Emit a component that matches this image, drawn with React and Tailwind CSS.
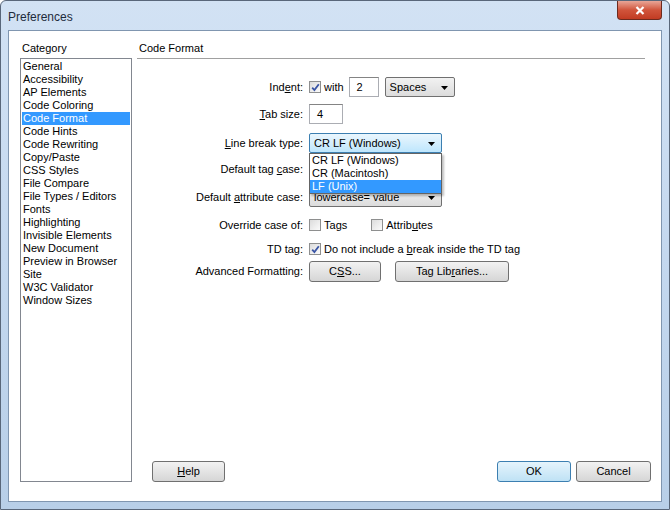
import React from "react";

const categories = [
  "General",
  "Accessibility",
  "AP Elements",
  "Code Coloring",
  "Code Format",
  "Code Hints",
  "Code Rewriting",
  "Copy/Paste",
  "CSS Styles",
  "File Compare",
  "File Types / Editors",
  "Fonts",
  "Highlighting",
  "Invisible Elements",
  "New Document",
  "Preview in Browser",
  "Site",
  "W3C Validator",
  "Window Sizes",
];

const Arrow = () => (
  <svg width="7" height="4" viewBox="0 0 7 4" className="absolute right-[6px] top-[8px]">
    <path d="M0 0 H7 L3.5 4 Z" fill="#000" />
  </svg>
);

const Checkbox = ({ checked }) => (
  <div className="w-[12px] h-[12px] border border-[#8e8f8f] bg-gradient-to-br from-[#dcdcdc] to-[#fbfbfb] flex items-center justify-center shrink-0">
    {checked && (
      <svg width="9" height="9" viewBox="0 0 9 9">
        <path d="M1.2 4.6 L3.4 7 L7.8 1.2" fill="none" stroke="#3a55a5" strokeWidth="1.8" />
      </svg>
    )}
  </div>
);

const Select = ({ children, className, focused }) => (
  <div
    className={
      "relative h-[20px] rounded-[2px] border pl-[4px] leading-[18px] " +
      (focused
        ? "border-[#3c7fb1] bg-gradient-to-b from-[#eaf6fd] to-[#bee6fd] "
        : "border-[#707070] bg-gradient-to-b from-[#f2f2f2] to-[#dcdcdc] ") +
      className
    }
  >
    {children}
    <Arrow />
  </div>
);

const Button = ({ children, className, primary }) => (
  <div
    className={
      "h-[21px] rounded-[3px] border flex items-center justify-center " +
      (primary
        ? "border-[#3c7fb1] bg-gradient-to-b from-[#e5f4fc] to-[#bfe2f5] "
        : "border-[#707070] bg-gradient-to-b from-[#f2f2f2] to-[#d6d6d6] ") +
      className
    }
  >
    {children}
  </div>
);

const Row = ({ label, className, children }) => (
  <div className={"flex items-center h-[20px] " + className}>
    <div className="w-[167px] text-right pr-[1px]">{label}</div>
    <div className="ml-[5px] flex items-center">{children}</div>
  </div>
);

export default function App() {
  return (
    <div
      className="w-[670px] h-[510px] bg-gradient-to-b from-[#d2e2f4] via-[#c4d8ef] to-[#b8cfe8] border border-[#59677a] rounded-t-[6px] flex flex-col text-[11px] text-black overflow-hidden"
      style={{ fontFamily: '"Liberation Sans", Arial, sans-serif' }}
    >
      {/* title bar */}
      <div className="h-[29px] flex items-start justify-between relative">
        <div className="pl-[7px] pt-[7px] text-[12px] text-[#1e2b3c]">Preferences</div>
        <div className="mr-[7px] w-[45px] h-[19px] rounded-b-[4px] border border-t-0 border-[#6d2a1e] bg-gradient-to-b from-[#e8a597] via-[#d0543b] to-[#c23b22] flex items-center justify-center">
          <svg width="10" height="9" viewBox="0 0 10 9">
            <path d="M1.5 1 L8.5 8 M8.5 1 L1.5 8" stroke="#fff" strokeWidth="2.2" />
          </svg>
        </div>
      </div>

      {/* client area */}
      <div className="flex-1 mx-[7px] mb-[7px] bg-white border border-[#8096b0] flex pt-[11px] pb-[19px]">
        {/* left column */}
        <div className="ml-[11px] w-[112px] flex flex-col">
          <div className="h-[13px] leading-[13px] pl-[2px]">Category</div>
          <div className="mt-[3px] flex-1 border border-[#828790] pt-[1px] pl-[1px] pr-[1px]">
            {categories.map((c) => (
              <div
                key={c}
                className={
                  "h-[13px] leading-[13px] pl-[1px] whitespace-nowrap " +
                  (c === "Code Format" ? "bg-[#3399ff] text-white" : "")
                }
              >
                {c}
              </div>
            ))}
          </div>
        </div>

        {/* right column */}
        <div className="ml-[5px] flex-1 flex flex-col pr-[10px]">
          <div className="h-[13px] leading-[13px] pl-[2px]">Code Format</div>
          <div className="mt-[3px] h-[1px] bg-[#a0a0a0] mr-[6px]" />

          <div className="mt-[18px] flex flex-col">
            <Row label={<>Ind<u>e</u>nt:</>}>
              <Checkbox checked />
              <span className="ml-[3px]">with</span>
              <div className="ml-[5px] w-[30px] h-[20px] border border-[#abadb3] border-t-[#848484] pl-[7px] leading-[18px]">2</div>
              <Select className="ml-[6px] w-[70px]">Spaces</Select>
            </Row>
            <Row label={<><u>T</u>ab size:</>} className="mt-[7px]">
              <div className="w-[34px] h-[20px] border border-[#abadb3] border-t-[#848484] pl-[7px] leading-[18px]">4</div>
            </Row>
            <Row label={<><u>L</u>ine break type:</>} className="mt-[9px]">
              <div className="relative">
                <Select focused className="w-[133px]">CR LF (Windows)</Select>
                <div className="absolute left-0 top-[20px] w-[133px] border border-[#646464] bg-white z-10 shadow-[2px_2px_2px_rgba(0,0,0,0.25)]">
                  <div className="h-[13px] leading-[13px] pl-[2px]">CR LF (Windows)</div>
                  <div className="h-[13px] leading-[13px] pl-[2px]">CR (Macintosh)</div>
                  <div className="h-[13px] leading-[13px] pl-[2px] bg-[#3399ff] text-white">LF (Unix)</div>
                </div>
              </div>
            </Row>
            <Row label={<>Default tag <u>c</u>ase:</>} className="mt-[6px]">
              <Select className="w-[133px]" />
            </Row>
            <Row label={<>Default <u>a</u>ttribute case:</>} className="mt-[8px]">
              <Select className="w-[133px]">lowercase= value</Select>
            </Row>
            <Row label="Override case of:" className="mt-[8px]">
              <Checkbox />
              <span className="ml-[3px]">Ta<u>g</u>s</span>
              <div className="ml-[24px]">
                <Checkbox />
              </div>
              <span className="ml-[3px]">Attrib<u>u</u>tes</span>
            </Row>
            <Row label="TD tag:" className="mt-[4px]">
              <Checkbox checked />
              <span className="ml-[3px]">Do not include a <u>b</u>reak inside the TD tag</span>
            </Row>
            <Row label="Advanced Formatting:" className="mt-[2px]">
              <Button className="w-[72px]">C<u>S</u>S...</Button>
              <Button className="ml-[14px] w-[114px]">Tag Lib<u>r</u>aries...</Button>
            </Row>
          </div>

          <div className="flex-1" />

          <div className="flex items-center pl-[15px]">
            <Button className="w-[73px]"><u>H</u>elp</Button>
            <div className="flex-1" />
            <Button primary className="w-[74px]">OK</Button>
            <Button className="ml-[5px] w-[75px]">Cancel</Button>
          </div>
        </div>
      </div>
    </div>
  );
}
